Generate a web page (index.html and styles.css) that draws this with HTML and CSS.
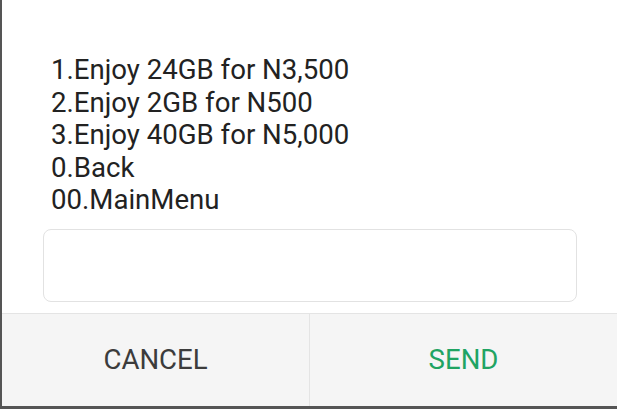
FILE: index.html
```html
<!DOCTYPE html>
<html>
<head>
<meta charset="utf-8">
<link rel="stylesheet" href="styles.css">
</head>
<body>
<div class="dialog">
  <div class="message">
    <div>1.Enjoy 24GB for N3,500</div>
    <div>2.Enjoy 2GB for N500</div>
    <div>3.Enjoy 40GB for N5,000</div>
    <div>0.Back</div>
    <div>00.MainMenu</div>
  </div>
  <div class="input"></div>
  <div class="actions">
    <div class="btn cancel">CANCEL</div>
    <div class="btn send">SEND</div>
  </div>
</div>
</body>
</html>
```

FILE: styles.css
```css
html, body {
  margin: 0;
  padding: 0;
  background: #fff;
}
.dialog {
  box-sizing: border-box;
  width: 617px;
  height: 409px;
  border-left: 2px solid #555;
  border-bottom: 3px solid #555;
  background: #fff;
  display: flex;
  flex-direction: column;
  font-family: Roboto, "Noto Sans", sans-serif;
}
.message {
  padding: 54px 0 0 49px;
  font-size: 27.6px;
  line-height: 32.5px;
  color: #222;
}
.input {
  margin: 12px 0 0 41px;
  width: 534px;
  height: 73px;
  box-sizing: border-box;
  border: 1px solid #e2e2e2;
  border-radius: 8px;
}
.actions {
  margin-top: 11px;
  flex: 1;
  display: flex;
  background: #f5f5f5;
  border-top: 1px solid #e4e4e4;
}
.btn {
  flex: 1;
  display: flex;
  align-items: center;
  justify-content: center;
  font-size: 27.6px;
}
.cancel {
  color: #3c3c3c;
}
.send {
  color: #1fa463;
  border-left: 1px solid #e4e4e4;
}
```
